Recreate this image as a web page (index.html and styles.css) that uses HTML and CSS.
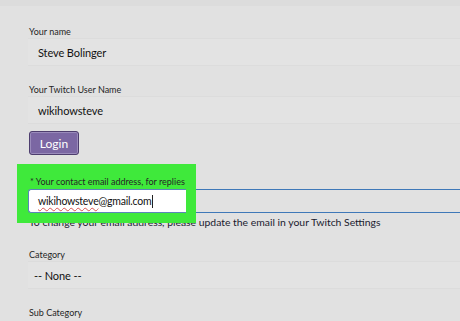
FILE: index.html
```html
<!DOCTYPE html>
<html>
<head>
<meta charset="utf-8">
<link rel="stylesheet" href="styles.css">
</head>
<body>
<div class="topline"></div>
<form class="form">
  <div class="field f-name">
    <label class="label">Your name</label>
    <div class="input"><span class="value">Steve Bolinger</span></div>
  </div>
  <div class="field f-user">
    <label class="label">Your Twitch User Name</label>
    <div class="input"><span class="value">wikihowsteve</span></div>
  </div>
  <div class="actions">
    <button type="button" class="btn">Login</button>
  </div>
  <div class="field f-email">
    <div class="highlight"></div>
    <label class="label raised">* Your contact email address, for replies</label>
    <div class="email-line">
      <span class="email-box"><span class="typo">wikihowsteve</span>@gmail.com<span class="caret"></span></span>
    </div>
    <p class="help">To change your email address, please update the email in your Twitch Settings</p>
  </div>
  <div class="field f-cat">
    <label class="label">Category</label>
    <div class="input select"><span class="value">-- None --</span></div>
  </div>
  <div class="field f-sub">
    <label class="label">Sub Category</label>
  </div>
</form>
</body>
</html>
```
FILE: styles.css
```css
html, body {
  margin: 0;
  padding: 0;
  background: #e1e1e1;
  font-family: Lato, "Open Sans", sans-serif;
  overflow: hidden;
}
.topline {
  height: 6px;
  background: #dcdcdc;
}
.form {
  padding-left: 28px;
  margin: 0;
}
.label {
  display: block;
  font-size: 9px;
  line-height: 12px;
  color: #262626;
  padding-left: 1px;
}
.input {
  height: 26px;
  background: #e3e3e3;
  border-top: 1px solid #dcdcdc;
  border-bottom: 1px solid #dcdcdc;
  display: flex;
  align-items: center;
  padding-left: 10px;
}
.value {
  font-size: 11px;
  color: #111;
  letter-spacing: -0.1px;
}
.f-name { margin-top: 20px; }
.f-user { margin-top: 18px; }
.actions { margin-top: 7px; }
.btn {
  display: block;
  width: 50px;
  height: 24px;
  margin-left: 1px;
  padding: 0;
  background: #7b67a3;
  border: 1px solid #4d3d6e;
  border-radius: 3px;
  box-shadow: inset 0 0 0 1px #9a8bbb;
  color: #fff;
  font-family: Lato, "Open Sans", sans-serif;
  font-size: 12px;
}
.f-email {
  position: relative;
  margin-top: 21px;
}
.highlight {
  position: absolute;
  left: -11px;
  top: -12px;
  width: 179px;
  height: 59px;
  background: #3fe93b;
  z-index: 1;
}
.raised {
  position: relative;
  z-index: 2;
}
.f-email .label {
  padding-left: 2px;
}
.email-line {
  margin-top: 1px;
  height: 22px;
  border-top: 1px solid #3f78b8;
  border-bottom: 1px solid #3f78b8;
}
.email-box {
  position: relative;
  z-index: 2;
  display: flex;
  align-items: center;
  box-sizing: border-box;
  width: 158px;
  height: 24px;
  margin-top: -1px;
  background: #fff;
  border: 1px solid #5a86b8;
  border-right: none;
  border-radius: 3px 0 0 3px;
  padding-left: 9px;
  font-size: 10.5px;
  letter-spacing: -0.22px;
  color: #111;
}
.typo {
  text-decoration: underline wavy #d9534f;
  text-decoration-thickness: 1px;
  text-underline-offset: 2px;
}
.caret {
  display: inline-block;
  width: 1px;
  height: 13px;
  background: #222;
  margin-left: 1px;
}
.help {
  margin: 3px 0 0 1px;
  font-size: 10.4px;
  line-height: 12px;
  color: #1a1a2e;
}
.f-cat { margin-top: 21px; }
.select { padding-left: 6px; }
.f-sub { margin-top: 18px; }
```
